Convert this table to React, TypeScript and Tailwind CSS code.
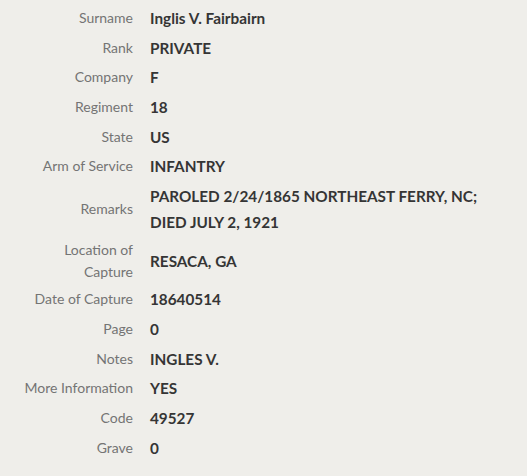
const rows: { label: string[]; value: string[] }[] = [
  { label: ['Surname'], value: ['Inglis V. Fairbairn'] },
  { label: ['Rank'], value: ['PRIVATE'] },
  { label: ['Company'], value: ['F'] },
  { label: ['Regiment'], value: ['18'] },
  { label: ['State'], value: ['US'] },
  { label: ['Arm of Service'], value: ['INFANTRY'] },
  { label: ['Remarks'], value: ['PAROLED 2/24/1865 NORTHEAST FERRY, NC;', 'DIED JULY 2, 1921'] },
  { label: ['Location of', 'Capture'], value: ['RESACA, GA'] },
  { label: ['Date of Capture'], value: ['18640514'] },
  { label: ['Page'], value: ['0'] },
  { label: ['Notes'], value: ['INGLES V.'] },
  { label: ['More Information'], value: ['YES'] },
  { label: ['Code'], value: ['49527'] },
  { label: ['Grave'], value: ['0'] },
];

export default function App() {
  return (
    <div className="w-[527px] h-[476px] bg-[#efeeea] pt-[3px] font-['Lato',sans-serif]">
      <dl className="grid grid-cols-[133px_1fr] gap-x-[17px]">
        {rows.map((r) => (
          <div key={r.label.join(' ')} className="contents">
            <dt className="flex items-center justify-end py-[1.85px] text-right text-[14px] leading-[22px] text-[#747474]">
              <span>
                {r.label.map((l, i) => (
                  <span key={i} className="block">{l}</span>
                ))}
              </span>
            </dt>
            <dd className="flex items-center py-[1.85px] text-[15.3px] font-bold leading-[26px] text-[#353535]">
              <span>
                {r.value.map((v, i) => (
                  <span key={i} className="block">{v}</span>
                ))}
              </span>
            </dd>
          </div>
        ))}
      </dl>
    </div>
  );
}
